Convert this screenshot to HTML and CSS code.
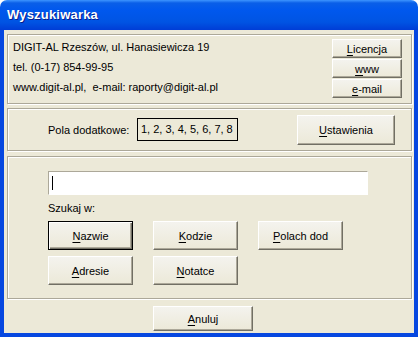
FILE: index.html
```html
<!DOCTYPE html>
<html lang="pl">
<head>
    <meta charset="UTF-8">
    <title>Wyszukiwarka</title>
    <link rel="stylesheet" href="styles.css">
</head>
<body>
    <div class="window">
        <div class="titlebar">Wyszukiwarka</div>
        <div class="client">
            <div class="group info">
                <div class="address">
                    <div>DIGIT-AL Rzeszów, ul. Hanasiewicza 19</div>
                    <div>tel. (0-17) 854-99-95</div>
                    <div>www.digit-al.pl,&nbsp; e-mail: raporty@digit-al.pl</div>
                </div>
                <div class="links">
                    <button class="btn small"><u>L</u>icencja</button>
                    <button class="btn small"><u>w</u>ww</button>
                    <button class="btn small"><u>e</u>-mail</button>
                </div>
            </div>

            <div class="group extra">
                <span class="label">Pola dodatkowe:</span>
                <span class="fields">1, 2, 3, 4, 5, 6, 7, 8</span>
                <button class="btn settings"><u>U</u>stawienia</button>
            </div>

            <div class="group search">
                <div class="input"><span class="caret"></span></div>
                <div class="caption">Szukaj w:</div>
                <div class="choices">
                    <button class="btn choice default"><u>N</u>azwie</button>
                    <button class="btn choice"><u>K</u>odzie</button>
                    <button class="btn choice"><u>P</u>olach dod</button>
                    <button class="btn choice"><u>A</u>dresie</button>
                    <button class="btn choice"><u>N</u>otatce</button>
                </div>
            </div>

            <div class="footer">
                <button class="btn cancel"><u>A</u>nuluj</button>
            </div>
        </div>
    </div>
</body>
</html>
```
FILE: styles.css
```css
body {
    margin: 0;
    background: #fff;
    font-family: 'Liberation Sans', Arial, sans-serif;
    font-size: 11px;
    color: #000;
}
.window {
    width: 418px;
    height: 337px;
    display: flex;
    flex-direction: column;
}
.titlebar {
    height: 30px;
    box-sizing: border-box;
    padding: 7px 0 0 7px;
    border-radius: 7px 7px 0 0;
    background: linear-gradient(to bottom, #3d95ff 0, #0a5fe8 3px, #0058ee 10px, #0054e3 22px, #003dd6 30px);
    color: #fff;
    font-size: 13px;
    font-weight: bold;
    letter-spacing: 0.2px;
    text-shadow: 1px 1px #0a1e8c;
}
.client {
    flex: 1;
    background: #ece9d8;
    border: 4px solid #0647e0;
    border-top: none;
    padding: 4px 2px 0 3px;
    display: flex;
    flex-direction: column;
}
.group {
    border: 1px solid #aca899;
    box-shadow: inset 1px 1px #fff, 1px 1px #fff;
}
.info {
    height: 70px;
    box-sizing: border-box;
    display: flex;
    justify-content: space-between;
    padding: 4px 9px 0 5px;
}
.address {
    line-height: 20px;
    margin-top: -2px;
}
.links {
    display: flex;
    flex-direction: column;
    gap: 1px;
}
.btn {
    font-family: inherit;
    font-size: 11px;
    color: #000;
    background: linear-gradient(to bottom, #f4f3ee, #ece9d8);
    border: 1px solid;
    border-color: #fff #716f64 #716f64 #fff;
    box-shadow: inset -1px -1px #aca899;
    padding: 0;
    box-sizing: border-box;
}
.btn u {
    text-decoration-thickness: 1px;
    text-underline-offset: 2px;
}
.small {
    width: 70px;
    height: 19px;
}
.extra {
    margin-top: 4px;
    height: 43px;
    box-sizing: border-box;
    display: flex;
    align-items: center;
    padding: 0 16px 0 40px;
}
.label {
    width: 89px;
}
.fields {
    width: 101px;
    height: 23px;
    box-sizing: border-box;
    border: 1px solid #000;
    padding-left: 3px;
    line-height: 21px;
    white-space: nowrap;
}
.settings {
    margin-left: auto;
    width: 98px;
    height: 30px;
}
.search {
    margin-top: 5px;
    height: 143px;
    box-sizing: border-box;
    padding: 14px 0 0 40px;
}
.input {
    width: 320px;
    height: 24px;
    box-sizing: border-box;
    background: #fff;
    border: 1px solid;
    border-color: #aca899 #fff #fff #aca899;
    padding: 4px 0 0 3px;
}
.caret {
    display: block;
    width: 1px;
    height: 14px;
    background: #000;
}
.caption {
    height: 26px;
    line-height: 26px;
}
.choices {
    display: grid;
    grid-template-columns: repeat(3, 85px);
    grid-auto-rows: 29px;
    column-gap: 20px;
    row-gap: 6px;
}
.default {
    border: 1px solid #000;
    box-shadow: inset 1px 1px #fff, inset -1px -1px #716f64, inset -2px -2px #aca899;
}
.footer {
    padding: 7px 0 0 146px;
}
.cancel {
    width: 100px;
    height: 25px;
}
```
